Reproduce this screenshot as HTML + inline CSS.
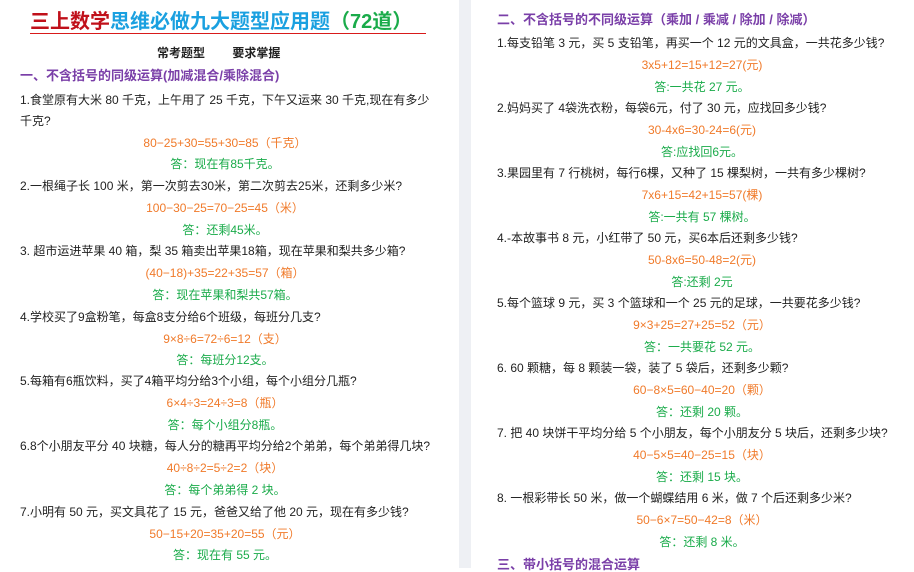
<!DOCTYPE html><html><head><meta charset="utf-8"><style>
body{margin:0;width:914px;height:568px;overflow:hidden;background:#fff;font-family:"Liberation Sans","Noto Sans CJK SC",sans-serif;position:relative}
.l{position:absolute;white-space:nowrap;font-size:12px;line-height:14px;color:#222}
.a{color:#f07a2a;text-align:center;width:300px}
.g{color:#1aab4a;text-align:center;width:300px}
.h{color:#7a3fa8;font-weight:bold;font-size:13px}
#sep{position:absolute;left:459px;top:0;width:12px;height:568px;background:#eef0f4}
</style></head><body>
<div id="sep"></div>
<div class="l" style="left:30px;top:10px;font-size:20px;line-height:24px;font-weight:bold"><span style="color:#c0101a">三上数学</span><span style="color:#1aa0e0">思维必做九大题型应用题</span><span style="color:#1aab4a">（72道）</span></div>
<div style="position:absolute;left:30px;top:33px;width:396px;height:1px;background:#d81a1a"></div>
<div class="l" style="left:157px;top:46px;font-weight:bold;font-size:12px">常考题型　　 要求掌握</div>
<div class="l h" style="left:20px;top:69px">一、不含括号的同级运算(加减混合/乘除混合)</div>
<div class="l" style="left:20px;top:93px">1.食堂原有大米 80 千克，上午用了 25 千克，下午又运来 30 千克,现在有多少</div>
<div class="l" style="left:20px;top:114px">千克?</div>
<div class="l a" style="left:75px;top:136px">80−25+30=55+30=85（千克）</div>
<div class="l g" style="left:75px;top:157px">答：现在有85千克。</div>
<div class="l" style="left:20px;top:179px">2.一根绳子长 100 米，第一次剪去30米，第二次剪去25米，还剩多少米?</div>
<div class="l a" style="left:75px;top:201px">100−30−25=70−25=45（米）</div>
<div class="l g" style="left:75px;top:223px">答：还剩45米。</div>
<div class="l" style="left:20px;top:244px">3. 超市运进苹果 40 箱，梨 35 箱卖出苹果18箱，现在苹果和梨共多少箱?</div>
<div class="l a" style="left:75px;top:266px">(40−18)+35=22+35=57（箱）</div>
<div class="l g" style="left:75px;top:288px">答：现在苹果和梨共57箱。</div>
<div class="l" style="left:20px;top:310px">4.学校买了9盒粉笔，每盒8支分给6个班级，每班分几支?</div>
<div class="l a" style="left:75px;top:332px">9×8÷6=72÷6=12（支）</div>
<div class="l g" style="left:75px;top:353px">答：每班分12支。</div>
<div class="l" style="left:20px;top:374px">5.每箱有6瓶饮料，买了4箱平均分给3个小组，每个小组分几瓶?</div>
<div class="l a" style="left:75px;top:396px">6×4÷3=24÷3=8（瓶）</div>
<div class="l g" style="left:75px;top:418px">答：每个小组分8瓶。</div>
<div class="l" style="left:20px;top:439px">6.8个小朋友平分 40 块糖，每人分的糖再平均分给2个弟弟，每个弟弟得几块?</div>
<div class="l a" style="left:75px;top:461px">40÷8÷2=5÷2=2（块）</div>
<div class="l g" style="left:75px;top:483px">答：每个弟弟得 2 块。</div>
<div class="l" style="left:20px;top:505px">7.小明有 50 元，买文具花了 15 元，爸爸又给了他 20 元，现在有多少钱?</div>
<div class="l a" style="left:75px;top:527px">50−15+20=35+20=55（元）</div>
<div class="l g" style="left:75px;top:548px">答：现在有 55 元。</div>

<div class="l h" style="left:497px;top:13px">二、不含括号的不同级运算（乘加 / 乘减 / 除加 / 除减）</div>
<div class="l" style="left:497px;top:36px">1.每支铅笔 3 元，买 5 支铅笔，再买一个 12 元的文具盒，一共花多少钱?</div>
<div class="l a" style="left:552px;top:58px">3x5+12=15+12=27(元)</div>
<div class="l g" style="left:552px;top:80px">答:一共花 27 元。</div>
<div class="l" style="left:497px;top:101px">2.妈妈买了 4袋洗衣粉，每袋6元，付了 30 元，应找回多少钱?</div>
<div class="l a" style="left:552px;top:123px">30-4x6=30-24=6(元)</div>
<div class="l g" style="left:552px;top:145px">答:应找回6元。</div>
<div class="l" style="left:497px;top:166px">3.果园里有 7 行桃树，每行6棵，又种了 15 棵梨树，一共有多少棵树?</div>
<div class="l a" style="left:552px;top:188px">7x6+15=42+15=57(棵)</div>
<div class="l g" style="left:552px;top:210px">答:一共有 57 棵树。</div>
<div class="l" style="left:497px;top:231px">4.-本故事书 8 元，小红带了 50 元，买6本后还剩多少钱?</div>
<div class="l a" style="left:552px;top:253px">50-8x6=50-48=2(元)</div>
<div class="l g" style="left:552px;top:275px">答:还剩 2元</div>
<div class="l" style="left:497px;top:296px">5.每个篮球 9 元，买 3 个篮球和一个 25 元的足球，一共要花多少钱?</div>
<div class="l a" style="left:552px;top:318px">9×3+25=27+25=52（元）</div>
<div class="l g" style="left:552px;top:340px">答：一共要花 52 元。</div>
<div class="l" style="left:497px;top:361px">6. 60 颗糖，每 8 颗装一袋，装了 5 袋后，还剩多少颗?</div>
<div class="l a" style="left:552px;top:383px">60−8×5=60−40=20（颗）</div>
<div class="l g" style="left:552px;top:405px">答：还剩 20 颗。</div>
<div class="l" style="left:497px;top:426px">7. 把 40 块饼干平均分给 5 个小朋友，每个小朋友分 5 块后，还剩多少块?</div>
<div class="l a" style="left:552px;top:448px">40−5×5=40−25=15（块）</div>
<div class="l g" style="left:552px;top:470px">答：还剩 15 块。</div>
<div class="l" style="left:497px;top:491px">8. 一根彩带长 50 米，做一个蝴蝶结用 6 米，做 7 个后还剩多少米?</div>
<div class="l a" style="left:552px;top:513px">50−6×7=50−42=8（米）</div>
<div class="l g" style="left:552px;top:535px">答：还剩 8 米。</div>
<div class="l h" style="left:497px;top:558px">三、带小括号的混合运算</div>
</body></html>
